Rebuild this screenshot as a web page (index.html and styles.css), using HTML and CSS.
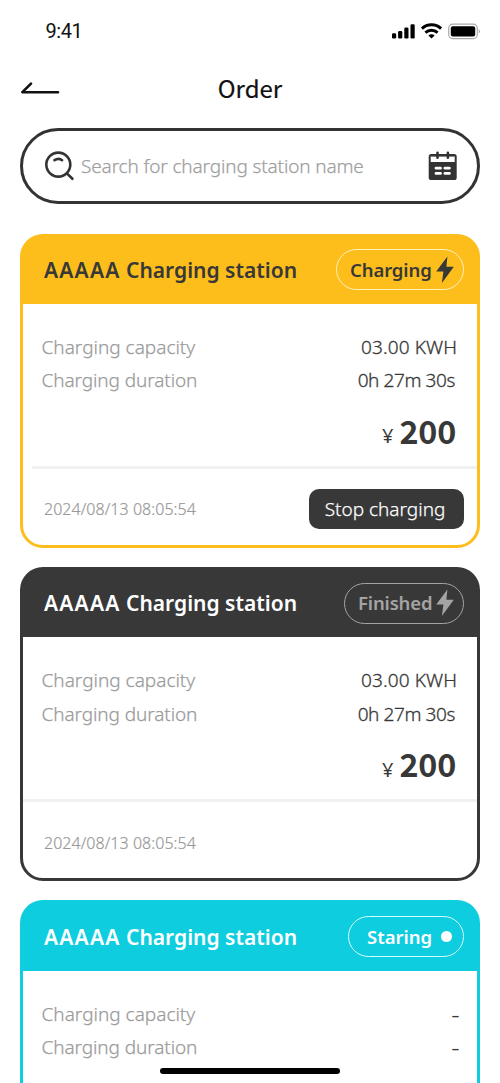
FILE: index.html
```html
<!DOCTYPE html>
<html lang="en">
<head>
<meta charset="utf-8">
<title>Order</title>
<link rel="stylesheet" href="styles.css">
</head>
<body>
<div class="screen">
  <div class="status">
    <span class="time">9:41</span>
    <svg class="status-icons" width="90" height="18" viewBox="0 0 90 18">
      <rect x="1" y="11.3" width="4.2" height="5.2" rx="1.3"/>
      <rect x="7.1" y="9" width="4.2" height="7.5" rx="1.3"/>
      <rect x="13.3" y="5.6" width="4.2" height="10.9" rx="1.3"/>
      <rect x="19.5" y="2.3" width="4.2" height="14.2" rx="1.3"/>
      <path d="M30.9 6.6a14 14 0 0 1 19.2 0M34.4 10.6a9 9 0 0 1 12.2 0" fill="none" stroke="#000" stroke-width="2.9"/>
      <path d="M37.4 13.4q3.1-2.4 6.2 0L40.5 16.5z"/>
      <rect x="57.7" y="2.2" width="28.6" height="14.4" rx="4" fill="none" stroke="#aaa" stroke-width="1.2"/>
      <rect x="59.8" y="4.3" width="24.4" height="10.2" rx="2"/>
      <path d="M87.8 7q2.1 2.4 0 4.8z" fill="#999"/>
    </svg>
  </div>
  <div class="nav">
    <svg class="back" width="40" height="14" viewBox="0 0 40 14"><path d="M11 1.6L2.4 10.2H38" fill="none" stroke="#111" stroke-width="2.6" stroke-linecap="round" stroke-linejoin="round"/></svg>
    <h1 class="heading">Order</h1>
  </div>
  <div class="search">
    <svg width="32" height="32" viewBox="0 0 32 32" fill="none" stroke="#333" stroke-width="2.6" stroke-linecap="round"><circle cx="14.3" cy="14.6" r="12"/><path d="M10.5 10.2q4.2-2.8 7.6 0M23.1 23.6l5.3 5.2"/></svg>
    <span class="placeholder">Search for charging station name</span>
    <svg width="30" height="30" viewBox="0 0 30 30"><rect x=".7" y="3.1" width="28" height="26" rx="2.6" fill="#333"/><path d="M2.7 5h24v6h-24z" fill="#fff"/><path d="M2.7 4.4h24" stroke="#333" stroke-width="2.4"/><path d="M9.5 1.8v5M19.9 1.8v5" stroke="#333" stroke-width="2.6" stroke-linecap="round"/><path d="M8 17.2h4.5M16.9 17.2h4.5M8 22.4h4.5M16.9 22.4h4.5" stroke="#fff" stroke-width="2.8" stroke-linecap="round"/></svg>
  </div>

  <section class="card yellow">
    <header class="card-head">
      <h2 class="title"><span class="code">AAAAA</span> Charging station</h2>
      <span class="badge b-charging"><span class="badge-text">Charging</span><svg width="18" height="28" viewBox="0 0 18 28"><path d="M11.4.4L.2 15.4h7.2L5.9 27 17.8 10.8H10.4z"/></svg></span>
    </header>
    <div class="details">
      <div class="row"><span class="label">Charging capacity</span><span class="value t-kwh">03.00 KWH</span></div>
      <div class="row"><span class="label t-dur">Charging duration</span><span class="value t-time">0h 27m 30s</span></div>
      <div class="price"><span class="yen">¥</span><span class="amount">200</span></div>
    </div>
    <footer class="card-foot"><span class="date">2024/08/13 08:05:54</span><span class="button">Stop charging</span></footer>
  </section>

  <section class="card dark">
    <header class="card-head">
      <h2 class="title"><span class="code">AAAAA</span> Charging station</h2>
      <span class="badge b-finished"><span class="badge-text">Finished</span><svg width="18" height="28" viewBox="0 0 18 28"><path d="M11.4.4L.2 15.4h7.2L5.9 27 17.8 10.8H10.4z"/></svg></span>
    </header>
    <div class="details">
      <div class="row"><span class="label">Charging capacity</span><span class="value t-kwh">03.00 KWH</span></div>
      <div class="row"><span class="label t-dur">Charging duration</span><span class="value t-time">0h 27m 30s</span></div>
      <div class="price"><span class="yen">¥</span><span class="amount">200</span></div>
    </div>
    <footer class="card-foot"><span class="date">2024/08/13 08:05:54</span></footer>
  </section>

  <section class="card cyan">
    <header class="card-head">
      <h2 class="title"><span class="code">AAAAA</span> Charging station</h2>
      <span class="badge b-staring"><span class="badge-text">Staring</span><i class="dot"></i></span>
    </header>
    <div class="details">
      <div class="row"><span class="label">Charging capacity</span><span class="value dash">-</span></div>
      <div class="row"><span class="label t-dur">Charging duration</span><span class="value dash">-</span></div>
    </div>
  </section>
  <div class="home-bar"></div>
</div>
</body>
</html>
```
FILE: styles.css
```css
* { box-sizing: border-box; }
body { margin: 0; background: #fff; }
.screen {
  position: relative;
  width: 500px;
  height: 1083px;
  overflow: hidden;
  padding: 0 20px;
  font-family: "Noto Sans", "Noto Sans CJK SC", sans-serif;
  color: #383838;
  white-space: nowrap;
}
svg { display: block; flex: none; }
h1, h2 { margin: 0; }
.status { display: flex; justify-content: space-between; align-items: center; height: 62px; padding-left: 25.5px; }
.status-icons { margin-right: -1px; }
.time { font: 400 20px/24px Roboto, sans-serif; color: #111; letter-spacing: -.4px; }
.nav { display: grid; grid-template-columns: 1fr auto 1fr; align-items: center; height: 53px; }
.heading { font: 400 24px/36px "Noto Sans CJK SC", sans-serif; color: #111; letter-spacing: 0; -webkit-text-stroke: .2px #111; padding-bottom: 2px; }
.search { display: flex; align-items: center; margin-top: 13px; height: 76px; border: 3px solid #333; border-radius: 38px; padding: 0 19px 0 20.5px; }
.placeholder { flex: 1; padding-left: 5.5px; font-size: 19px; line-height: 28px; font-weight: 300; color: #a0a0a0; letter-spacing: -.14px; -webkit-text-stroke: .25px #a0a0a0; }
.card { display: flex; flex-direction: column; height: 314.4px; margin-top: 19px; border: 3px solid var(--tone); border-radius: 23px; background: linear-gradient(var(--tone) 50px, #fff 50px); }
.yellow { --tone: #fdbe1b; --title: #383838; --badge: #383838; --line: #fff0bd; margin-top: 29.6px; }
.dark { --tone: #383838; --title: #fff; --badge: #a4a4a4; --line: #a4a4a4; }
.cyan { --tone: #0dcddf; --title: #fff; --badge: #fff; --line: #d5ffff; }
.card-head { display: flex; align-items: center; justify-content: space-between; flex: none; height: 67.5px; padding: 0 13px 1px 21px; background: var(--tone); border-radius: 19px 19px 0 0; }
.title { font-size: 21px; line-height: 30px; font-weight: 600; color: var(--title); }
.code { letter-spacing: 1.2px; }
.badge { display: flex; align-items: center; justify-content: space-between; height: 41px; border: 1.4px solid var(--line); border-radius: 21px; padding: 0 9.5px 0 13px; color: var(--badge); font-size: 18.5px; font-weight: 600; line-height: 28px; }
.badge svg { fill: var(--badge); }
.b-charging { width: 128px; }
.b-charging .badge-text { letter-spacing: -.1px; }
.b-finished { width: 120px; }
.b-finished .badge-text { letter-spacing: -.15px; }
.b-staring { width: 116px; padding: 0 11px 0 18px; }
.dot { width: 11px; height: 11px; border-radius: 50%; background: #fff; }
.details { padding: 27px 20px 0 18.5px; }
.row { display: flex; justify-content: space-between; height: 33.4px; line-height: 33.4px; font-size: 19px; }
.label { font-weight: 300; color: #9b9b9b; -webkit-text-stroke: .25px #9b9b9b; }
.t-dur { letter-spacing: -.1px; }
.value { font-weight: 300; font-size: 19px; -webkit-text-stroke: .3px #383838; }
.t-kwh { letter-spacing: .1px; }
.t-time { margin-right: 2px; letter-spacing: -.4px; }
.dash { margin-right: -2.5px; font-size: 26px; -webkit-text-stroke: 0; }
.price { display: flex; justify-content: flex-end; align-items: baseline; gap: 6px; line-height: 48px; padding: 8px 1px 0 0; }
.yen { font-size: 20px; position: relative; top: -.5px; }
.amount { font-family: "Noto Sans CJK SC", sans-serif; font-size: 32.3px; font-weight: 700; letter-spacing: -.2px; }
.card-foot { display: flex; align-items: center; justify-content: space-between; flex: none; margin-top: auto; height: 79px; border-top: 3px solid #f1f1f1; padding: 5px 13px 0 21px; }
.yellow .card-foot { margin-left: 9px; padding-left: 12px; }
.date { font-size: 16px; font-weight: 300; color: #999; line-height: 24px; letter-spacing: .05px; -webkit-text-stroke: .2px #999; }
.button { width: 155px; height: 40px; border-radius: 10px; background: #383838; color: #fff; font-size: 19px; font-weight: 300; line-height: 40px; text-align: center; padding-right: 3px; -webkit-text-stroke: .25px #fff; }
.home-bar { position: absolute; left: 160px; top: 1067.5px; width: 180px; height: 6px; border-radius: 3px; background: #000; }
```
